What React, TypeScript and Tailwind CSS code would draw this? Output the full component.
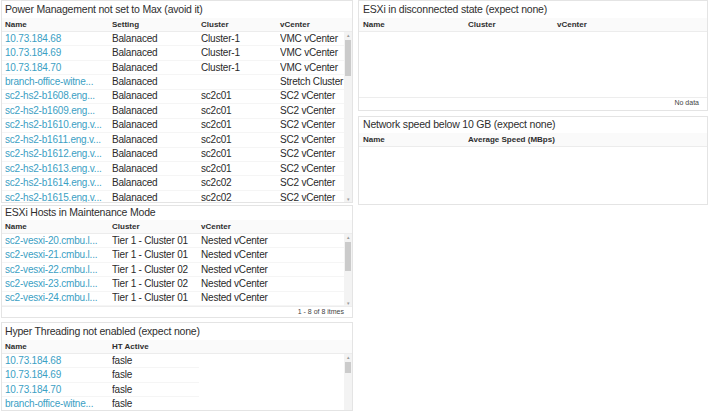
import React from 'react';

type Cell = string;
type Col = { label: string; w: number };

const LINK = 'text-[#3ba0c4]';

function Scrollbar({ thumbTop, thumbH }: { thumbTop: number; thumbH: number }) {
  return (
    <div className="w-[8px] shrink-0 bg-[#f3f3f3] flex flex-col items-center">
      <div className="h-[6px] text-[5px] leading-[6px] text-[#9a9a9a]">▴</div>
      <div className="w-[6px] bg-[#cbcbcb]" style={{ marginTop: thumbTop, height: thumbH }} />
      <div className="flex-1" />
      <div className="h-[6px] text-[5px] leading-[6px] text-[#9a9a9a]">▾</div>
    </div>
  );
}

function Panel({
  title,
  titleH,
  cols,
  rows,
  scroll,
  footer,
  bodyH,
  rowW,
  pad = 3,
  className = '',
}: {
  title: string;
  titleH: number;
  cols: Col[];
  rows: Cell[][];
  scroll?: { top: number; h: number };
  footer?: string;
  bodyH: number;
  rowW?: number;
  pad?: number;
  className?: string;
}) {
  return (
    <div className={`bg-white border border-[#e4e4e4] flex flex-col overflow-hidden ${className}`}>
      <div
        className="flex items-center shrink-0 text-[10.5px] tracking-[-0.2px] text-[#2e2e2e] whitespace-nowrap"
        style={{ height: titleH, paddingLeft: pad }}
      >
        {title}
      </div>
      <div
        className="h-[14px] shrink-0 flex items-center bg-[#fafafa] border-b border-[#ececec] text-[8px] font-bold text-[#2e2e2e]"
        style={{ paddingLeft: pad }}
      >
        {cols.map((c) => (
          <div key={c.label} style={{ width: c.w }} className="shrink-0 whitespace-nowrap">
            {c.label}
          </div>
        ))}
      </div>
      <div className="flex shrink-0" style={{ height: bodyH }}>
        <div className="flex-1 overflow-hidden">
          {rows.map((r, i) => (
            <div
              key={i}
              className="h-[14.45px] flex items-center text-[10px] tracking-[-0.2px] leading-[12px] border-b border-[#f5f5f5]"
              style={rowW ? { width: rowW, paddingLeft: pad } : { paddingLeft: pad }}
            >
              {r.map((v, j) => (
                <div
                  key={j}
                  style={{ width: cols[j].w }}
                  className={`shrink-0 whitespace-nowrap overflow-hidden ${j === 0 ? LINK : 'text-[#2a2a2a]'}`}
                >
                  {v}
                </div>
              ))}
            </div>
          ))}
        </div>
        {scroll && <Scrollbar thumbTop={scroll.top} thumbH={scroll.h} />}
      </div>
      {footer && (
        <div className="flex-1 flex items-center justify-end pr-[8px] pb-[2px] text-[7px] text-[#444] border-t border-[#ededed]">
          {footer}
        </div>
      )}
    </div>
  );
}

const powerRows: Cell[][] = [
  ['10.73.184.68', 'Balanaced', 'Cluster-1', 'VMC vCenter'],
  ['10.73.184.69', 'Balanaced', 'Cluster-1', 'VMC vCenter'],
  ['10.73.184.70', 'Balanaced', 'Cluster-1', 'VMC vCenter'],
  ['branch-office-witne...', 'Balanaced', '', 'Stretch Cluster'],
  ['sc2-hs2-b1608.eng...', 'Balanaced', 'sc2c01', 'SC2 vCenter'],
  ['sc2-hs2-b1609.eng...', 'Balanaced', 'sc2c01', 'SC2 vCenter'],
  ['sc2-hs2-b1610.eng.v...', 'Balanaced', 'sc2c01', 'SC2 vCenter'],
  ['sc2-hs2-b1611.eng.v...', 'Balanaced', 'sc2c01', 'SC2 vCenter'],
  ['sc2-hs2-b1612.eng.v...', 'Balanaced', 'sc2c01', 'SC2 vCenter'],
  ['sc2-hs2-b1613.eng.v...', 'Balanaced', 'sc2c01', 'SC2 vCenter'],
  ['sc2-hs2-b1614.eng.v...', 'Balanaced', 'sc2c02', 'SC2 vCenter'],
  ['sc2-hs2-b1615.eng.v...', 'Balanaced', 'sc2c02', 'SC2 vCenter'],
];

const maintRows: Cell[][] = [
  ['sc2-vesxi-20.cmbu.l...', 'Tier 1 - Cluster 01', 'Nested vCenter'],
  ['sc2-vesxi-21.cmbu.l...', 'Tier 1 - Cluster 01', 'Nested vCenter'],
  ['sc2-vesxi-22.cmbu.l...', 'Tier 1 - Cluster 02', 'Nested vCenter'],
  ['sc2-vesxi-23.cmbu.l...', 'Tier 1 - Cluster 02', 'Nested vCenter'],
  ['sc2-vesxi-24.cmbu.l...', 'Tier 1 - Cluster 01', 'Nested vCenter'],
];

const htRows: Cell[][] = [
  ['10.73.184.68', 'fasle'],
  ['10.73.184.69', 'fasle'],
  ['10.73.184.70', 'fasle'],
  ['branch-office-witne...', 'fasle'],
];

export default function App() {
  return (
    <div
      className="w-[709px] h-[411px] bg-white overflow-hidden flex gap-[5px] pl-[1px]"
      style={{ fontFamily: '"Liberation Sans", Arial, sans-serif' }}
    >
      <div className="w-[352px] flex flex-col">
        <Panel
          className="h-[203px] shrink-0"
          title="Power Management not set to Max (avoid it)"
          titleH={17}
          cols={[{ label: 'Name', w: 107 }, { label: 'Setting', w: 89 }, { label: 'Cluster', w: 79 }, { label: 'vCenter', w: 70 }]}
          rows={powerRows}
          bodyH={170}
          scroll={{ top: 2, h: 36 }}
        />
        <Panel
          className="h-[113px] shrink-0 mt-[2px]"
          title="ESXi Hosts in Maintenance Mode"
          titleH={14}
          cols={[{ label: 'Name', w: 107 }, { label: 'Cluster', w: 89 }, { label: 'vCenter', w: 100 }]}
          rows={maintRows}
          bodyH={72}
          scroll={{ top: 2, h: 29 }}
          footer="1 - 8 of 8 itmes"
        />
        <Panel
          className="flex-1 mt-[4px]"
          title="Hyper Threading not enabled (expect none)"
          titleH={17}
          cols={[{ label: 'Name', w: 107 }, { label: 'HT Active', w: 89 }]}
          rows={htRows}
          rowW={197}
          bodyH={80}
          scroll={{ top: 2, h: 11 }}
        />
      </div>
      <div className="w-[350px] flex flex-col">
        <Panel
          className="h-[111px] shrink-0"
          title="ESXi in disconnected state (expect none)"
          titleH={17}
          pad={4}
          cols={[{ label: 'Name', w: 105 }, { label: 'Cluster', w: 89 }, { label: 'vCenter', w: 90 }]}
          rows={[]}
          bodyH={65}
          footer="No data"
        />
        <Panel
          className="h-[89px] shrink-0 mt-[5px]"
          title="Network speed below 10 GB (expect none)"
          titleH={16}
          pad={4}
          cols={[{ label: 'Name', w: 105 }, { label: 'Average Speed (MBps)', w: 150 }]}
          rows={[]}
          bodyH={56}
        />
      </div>
    </div>
  );
}
